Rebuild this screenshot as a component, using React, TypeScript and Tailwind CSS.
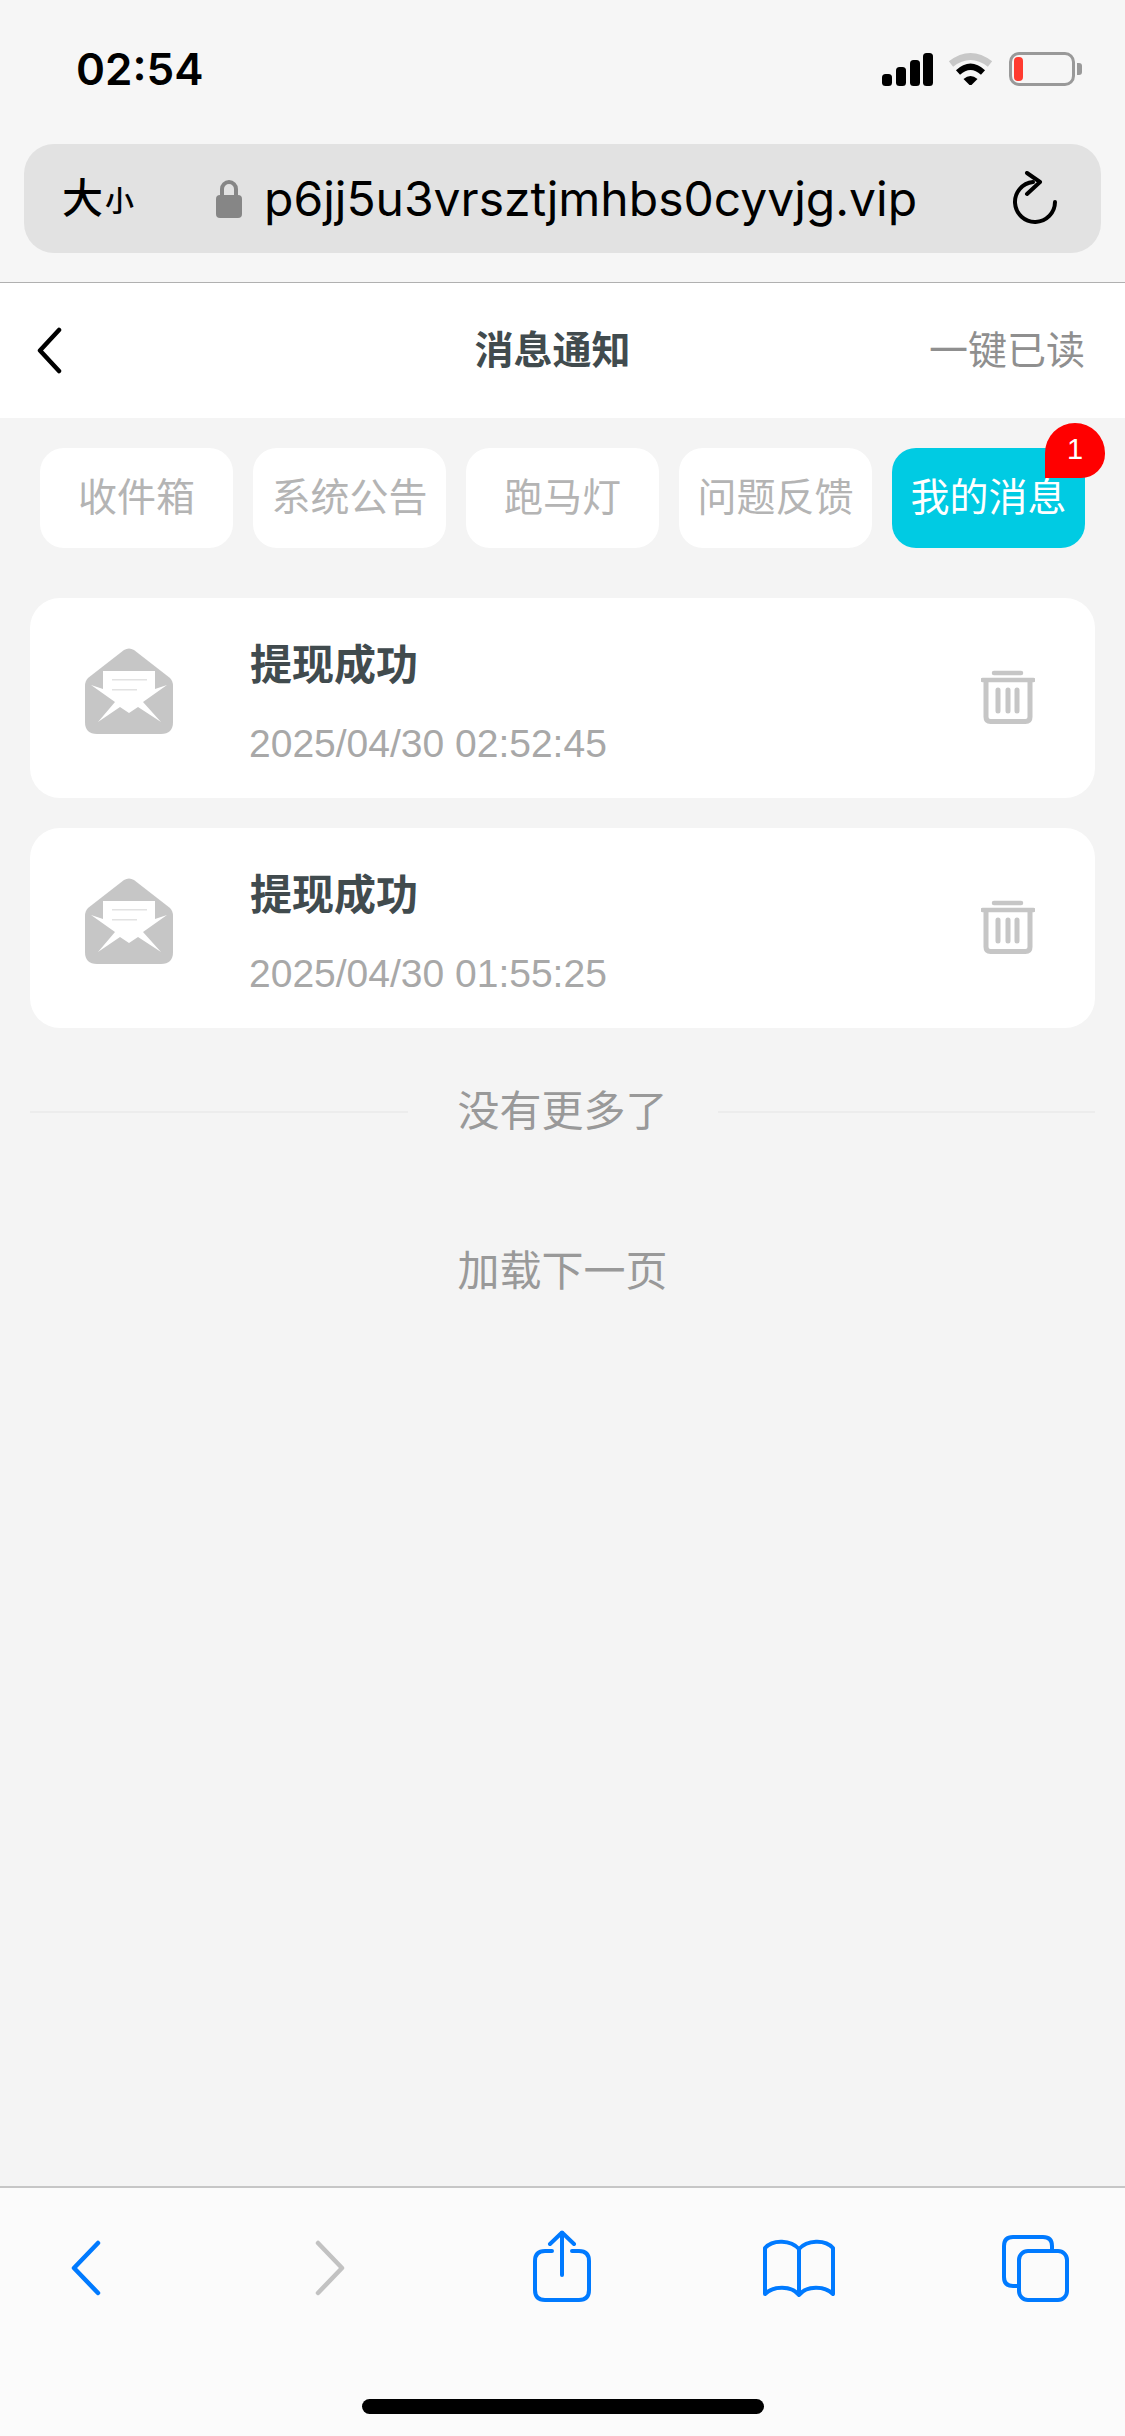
const tabs = ["收件箱", "系统公告", "跑马灯", "问题反馈", "我的消息"];
const msgs = ["2025/04/30 02:52:45", "2025/04/30 01:55:25"];

function Envelope() {
  return (
    <svg width="88" height="86" viewBox="0 0 88 86" className="block">
      <path d="M39 2 Q44 -1 49 2 L85 30 Q88 33 88 38 L88 74 Q88 86 76 86 L12 86 Q0 86 0 74 L0 38 Q0 33 3 30 Z" fill="#c6c6c6" />
      <polygon points="6,37 18,41 18,23 70,23 70,41 82,37 58,54 76,74 53,59 44,65 35,59 13,74 30,54" fill="#ffffff" />
      <rect x="27" y="31" width="35" height="1.5" fill="#e2e2e2" />
      <rect x="27" y="41" width="25" height="1.5" fill="#e2e2e2" />
    </svg>
  );
}

function Trash() {
  return (
    <svg width="54" height="54" viewBox="0 0 54 54" className="block">
      <path d="M13 3 H40" stroke="#c6c6c6" strokeWidth="4.5" strokeLinecap="round" fill="none" />
      <path d="M1.5 10 H52.5" stroke="#c6c6c6" strokeWidth="4.5" strokeLinecap="round" fill="none" />
      <path d="M5 10 V47 Q5 51.5 9.5 51.5 H44.5 Q49 51.5 49 47 V10" stroke="#c6c6c6" strokeWidth="5" fill="none" />
      <path d="M17 20 V41 M27 20 V41 M36 20 V41" stroke="#c6c6c6" strokeWidth="5" strokeLinecap="round" fill="none" />
    </svg>
  );
}

export default function App() {
  return (
    <div className="flex h-[2436px] w-[1125px] flex-col overflow-hidden bg-[#f4f4f4] [font-family:'Liberation_Sans','Noto_Sans_CJK_SC',sans-serif]">
      <header className="h-[283px] border-b border-[#b0b0b0] bg-[#f6f6f6]">
        <div className="flex h-[144px] items-start justify-between pt-[51px] pl-[76px] pr-[43px]">
          <span className="text-[44px] leading-[36px] font-semibold text-black [font-family:Inter,sans-serif]">02:54</span>
          <div className="flex items-start pt-px">
            <svg width="51" height="33" viewBox="0 0 51 33" className="mt-px block">
              <rect x="0" y="21" width="10" height="12" rx="3.5" fill="#000" />
              <rect x="14" y="14" width="10" height="19" rx="3.5" fill="#000" />
              <rect x="28" y="7" width="10" height="26" rx="3.5" fill="#000" />
              <rect x="41" y="0" width="10" height="33" rx="3.5" fill="#000" />
            </svg>
            <svg width="45" height="33" viewBox="0 0 45 33" className="ml-[15px] block">
              <path d="M3 12 Q22.5 -3 42 12" stroke="#c8c8c8" strokeWidth="7" fill="none" />
              <path d="M10 20.5 Q22.5 9 35 20.5" stroke="#000" strokeWidth="6" fill="none" />
              <path d="M15.5 27 Q22.5 21 29.5 27 L22.5 34 Z" fill="#000" />
            </svg>
            <div className="ml-[16px] flex items-center">
              <div className="h-[34px] w-[66px] rounded-[10px] border-[3.5px] border-[#999999] p-[2px]">
                <div className="h-full w-[9px] rounded-[4px] bg-[#ff3b30]" />
              </div>
              <div className="ml-[2px] h-[12px] w-[5px] rounded-r-[3px] bg-[#999999]" />
            </div>
          </div>
        </div>
        <div className="mx-[24px] flex h-[109px] items-center rounded-[30px] bg-[#e2e2e2] pl-[38px] pr-[43px]">
          <span className="flex w-[154px] items-end font-medium text-black">
            <span className="text-[41px] leading-[48px]">大</span>
            <span className="ml-[2px] text-[29px] leading-[42px]">小</span>
          </span>
          <svg width="26" height="39" viewBox="0 0 26 39" className="block">
            <path d="M6 18 V10 A7 7 0 0 1 20 10 V18" stroke="#868686" strokeWidth="4" fill="none" />
            <rect x="0" y="16" width="26" height="23" rx="4" fill="#868686" />
          </svg>
          <span className="ml-[22px] text-[48px] leading-[60px] text-black [font-family:Inter,sans-serif]">p6jj5u3vrsztjmhbs0cyvjg.vip</span>
          <svg width="46" height="55" viewBox="0 0 46 55" className="ml-auto block">
            <path d="M21 11 A20 20 0 1 0 43 31" stroke="#000" strokeWidth="4" strokeLinecap="round" fill="none" />
            <path d="M15 2 L28 11 L15 23" stroke="#000" strokeWidth="4" strokeLinecap="round" strokeLinejoin="round" fill="none" />
          </svg>
        </div>
      </header>

      <nav className="grid h-[135px] grid-cols-[1fr_auto_1fr] items-center bg-white pr-[20px]">
        <svg width="26" height="47" viewBox="0 0 26 47" className="ml-[36px] block">
          <path d="M23 3 L4 23.5 L23 44" stroke="#000" strokeWidth="4.5" strokeLinecap="round" strokeLinejoin="round" fill="none" />
        </svg>
        <h1 className="text-[39px] leading-[50px] font-bold text-[#414b4e]">消息通知</h1>
        <span className="mr-[20px] justify-self-end text-[39px] leading-[50px] text-[#8f8f8f]">一键已读</span>
      </nav>

      <main className="flex-1">
        <div className="flex gap-[20px] px-[40px] pt-[30px]">
          {tabs.map((t, i) => (
            <div
              key={t}
              className={
                i === 4
                  ? "relative flex h-[100px] w-[193px] items-center justify-center rounded-[24px] bg-[#00cbe3] text-[39px] text-white"
                  : "relative flex h-[100px] w-[193px] items-center justify-center rounded-[24px] bg-white text-[39px] text-[#b4b4b4]"
              }
            >
              {t}
              {i === 4 && (
                <span className="absolute left-[153px] top-[-25px] flex h-[55px] w-[60px] items-center justify-center rounded-tl-[30px] rounded-tr-[30px] rounded-br-[24px] bg-[#ff0000] pb-[2px] text-[29px] leading-none text-white">
                  1
                </span>
              )}
            </div>
          ))}
        </div>

        <div className="mx-[30px] mt-[50px] flex flex-col gap-[30px]">
          {msgs.map((d) => (
            <div key={d} className="flex h-[200px] items-start rounded-[30px] bg-white">
              <div className="ml-[55px] mt-[50px]">
                <Envelope />
              </div>
              <div className="ml-[76px] flex flex-col gap-[30px] pt-[44px]">
                <span className="pl-px text-[42px] leading-[48px] font-bold text-[#414b4e]">提现成功</span>
                <span className="text-[39px] leading-[48px] text-[#a8a8a8]">{d}</span>
              </div>
              <div className="ml-auto mr-[60px] mt-[72px]">
                <Trash />
              </div>
            </div>
          ))}
        </div>

        <div className="mx-[30px] mt-[59px] flex h-[50px] items-center">
          <div className="h-[2px] flex-1 bg-[#ececec]" />
          <span className="mx-[50px] text-[42px] leading-[50px] text-[#999999]">没有更多了</span>
          <div className="h-[2px] flex-1 bg-[#ececec]" />
        </div>
        <div className="mt-[110px] text-center text-[42px] leading-[50px] text-[#999999]">加载下一页</div>
      </main>

      <footer className="flex h-[250px] flex-col border-t-2 border-[#c6c6c6] bg-[#fbfbfb]">
        <div className="flex h-[211px] items-start">
          <svg width="32" height="56" viewBox="0 0 32 56" className="ml-[70px] mt-[52px] block">
            <path d="M28 3 L4 28 L28 53" stroke="#007aff" strokeWidth="4.5" strokeLinecap="round" strokeLinejoin="round" fill="none" />
          </svg>
          <svg width="32" height="56" viewBox="0 0 32 56" className="ml-[212px] mt-[52px] block">
            <path d="M4 3 L28 28 L4 53" stroke="#c2c2c2" strokeWidth="4.5" strokeLinecap="round" strokeLinejoin="round" fill="none" />
          </svg>
          <svg width="58" height="72" viewBox="0 0 58 72" className="ml-[187px] mt-[42px] block">
            <path d="M19 21 H12 Q2 21 2 31 V60 Q2 70 12 70 H46 Q56 70 56 60 V31 Q56 21 46 21 H39" stroke="#007aff" strokeWidth="4" strokeLinecap="round" fill="none" />
            <path d="M29 3 V45" stroke="#007aff" strokeWidth="4" strokeLinecap="round" fill="none" />
            <path d="M17 14 L29 2.5 L41 14" stroke="#007aff" strokeWidth="4" strokeLinecap="round" strokeLinejoin="round" fill="none" />
          </svg>
          <svg width="72" height="58" viewBox="0 0 72 58" className="ml-[172px] mt-[51px] block">
            <path d="M36 10 C28 1 10 0 2 9 V55 C10 47 28 46 36 56 C44 46 62 47 70 55 V9 C62 0 44 1 36 10 Z M36 10 V56" stroke="#007aff" strokeWidth="4" strokeLinejoin="round" fill="none" />
          </svg>
          <svg width="67" height="67" viewBox="0 0 67 67" className="ml-[167px] mt-[47px] block">
            <path d="M17 51 H11 Q2 51 2 42 V11 Q2 2 11 2 H41 Q50 2 50 11 V16" stroke="#007aff" strokeWidth="4" fill="none" />
            <rect x="17" y="16" width="48" height="49" rx="9" stroke="#007aff" strokeWidth="4" fill="none" />
          </svg>
        </div>
        <div className="ml-[362px] h-[15px] w-[402px] rounded-full bg-black" />
      </footer>
    </div>
  );
}
